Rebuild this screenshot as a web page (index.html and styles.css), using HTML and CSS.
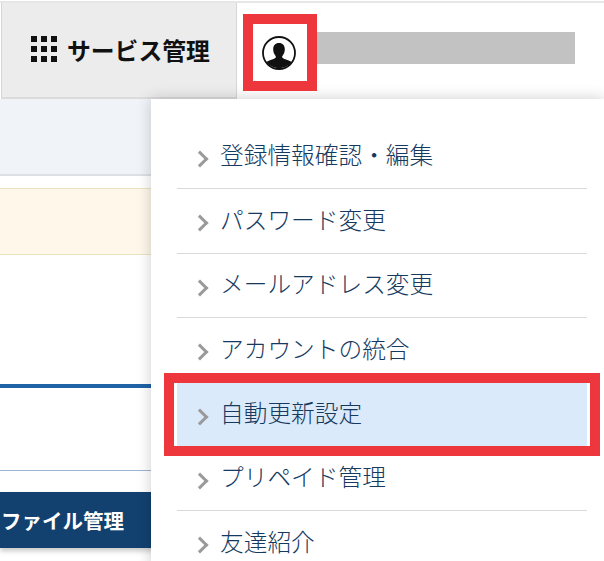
FILE: index.html
```html
<!DOCTYPE html>
<html lang="ja">
<head>
<meta charset="utf-8">
<title>サービス管理</title>
<link rel="stylesheet" href="styles.css">
</head>
<body>
<div class="page">
  <header class="header">
    <div class="service">
      <svg class="grid-icon" width="26" height="26" viewBox="0 0 26 26" aria-hidden="true">
        <g fill="#111">
          <rect x="0" y="0" width="6" height="6"/><rect x="10" y="0" width="6" height="6"/><rect x="20" y="0" width="6" height="6"/>
          <rect x="0" y="10" width="6" height="6"/><rect x="10" y="10" width="6" height="6"/><rect x="20" y="10" width="6" height="6"/>
          <rect x="0" y="20" width="6" height="6"/><rect x="10" y="20" width="6" height="6"/><rect x="20" y="20" width="6" height="6"/>
        </g>
      </svg>
      <span class="service-label">サービス管理</span>
    </div>
    <div class="user">
      <svg class="user-icon" width="34" height="34" viewBox="0 0 34 34" aria-hidden="true">
        <circle cx="17" cy="17" r="16" fill="#fff" stroke="#111" stroke-width="1.800"/>
        <path fill="#111" d="M17 7c-3.900 0-6 2.800-5.800 6.600.1 2.700 1 4.900 2.400 6.300.4.500.4 1.500-.3 2.100-1.800 1.300-6 2.200-9 4a16 16 0 0 0 25.400 0c-3-1.800-7.200-2.700-9-4-.7-.6-.7-1.600-.3-2.100 1.400-1.400 2.300-3.600 2.400-6.300C23 9.800 20.900 7 17 7z"/>
      </svg>
      <div class="masked"></div>
    </div>
  </header>
  <div class="band"></div>
  <div class="notice"></div>
  <div class="rule-blue"></div>
  <div class="rule-thin"></div>
  <div class="tab"><span class="tab-label">ファイル管理</span></div>

  <nav class="dropdown">
    <ul class="menu">
      <li class="item"><span class="chevron"></span>登録情報確認・編集</li>
      <li class="item"><span class="chevron"></span>パスワード変更</li>
      <li class="item"><span class="chevron"></span>メールアドレス変更</li>
      <li class="item"><span class="chevron"></span>アカウントの統合</li>
      <li class="item item-active"><span class="chevron"></span>自動更新設定</li>
      <li class="item"><span class="chevron"></span>プリペイド管理</li>
      <li class="item"><span class="chevron"></span>友達紹介</li>
    </ul>
  </nav>

  <div class="mark mark-user"></div>
  <div class="mark mark-item"></div>
</div>
</body>
</html>
```
FILE: styles.css
```css
* { box-sizing: border-box; }
html, body { margin: 0; padding: 0; background: #fff; }
body { font-family: "Noto Sans CJK JP", "Noto Sans", sans-serif; }
.page { position: relative; width: 604px; height: 561px; overflow: hidden; }

.header {
  display: flex;
  height: 98px;
  margin-top: 1px;
  border-top: 2px solid #e6e6e6;
}
.service {
  display: flex;
  align-items: center;
  gap: 10px;
  width: 236px;
  margin-left: 1px;
  padding-left: 29px;
  padding-bottom: 2px;
  background: #ececec;
  border-left: 1px solid #d6d6d6;
  border-right: 1px solid #d6d6d6;
  border-bottom: 2px solid #dcdcdc;
}
.service-label { font-size: 23.800px; font-weight: 700; color: #111; }
.user { display: flex; align-items: center; }
.user-icon { display: block; margin: 4px 0 0 25px; }
.masked { width: 258px; height: 32px; margin: -6px 0 0 21px; background: #c2c2c2; }

.band { height: 77px; background: #f0f4f8; border-bottom: 2px solid #dbe1e7; }
.notice {
  height: 67px;
  margin-top: 12px;
  background: #fef7ea;
  border-top: 1px solid #ebe3c4;
  border-bottom: 1px solid #ebe3c4;
}
.rule-blue { height: 4px; margin-top: 129px; background: #1f62a6; }
.rule-thin { height: 1px; margin-top: 82px; background: #9cb5d2; }
.tab {
  display: flex;
  align-items: center;
  height: 56px;
  margin-top: 21px;
  padding-left: 1px;
  background: #12416f;
  box-shadow: 0 3px 5px rgba(0, 0, 0, 0.22);
}
.tab-label { font-size: 20.500px; font-weight: 700; color: #fff; }

.dropdown {
  position: absolute;
  left: 151px;
  top: 99px;
  width: 453px;
  height: 470px;
  padding: 25.800px 0 0 26px;
  background: #fff;
  box-shadow: 0 0 14px rgba(0, 0, 0, 0.2);
}
.menu { list-style: none; margin: 0; padding: 0; width: 410px; }
.item {
  display: flex;
  align-items: center;
  height: 64.400px;
  padding: 0 0 4px 20px;
  font-size: 23.700px;
  font-weight: 300;
  color: #163a5f;
  border-bottom: 1px solid #d9d9d9;
}
.item-active { background: #dbeafa; }
.chevron {
  flex: none;
  width: 12px;
  height: 12px;
  margin-right: 14px;
  margin-top: 9px;
  margin-left: -3px;
  border-top: 3px solid #9a9a9a;
  border-right: 3px solid #9a9a9a;
  transform: rotate(45deg);
}

.mark { position: absolute; border: 10px solid #ee363d; pointer-events: none; }
.mark-user { left: 243px; top: 14px; width: 74px; height: 77px; }
.mark-item { left: 164px; top: 373px; width: 436px; height: 83px; }
```
